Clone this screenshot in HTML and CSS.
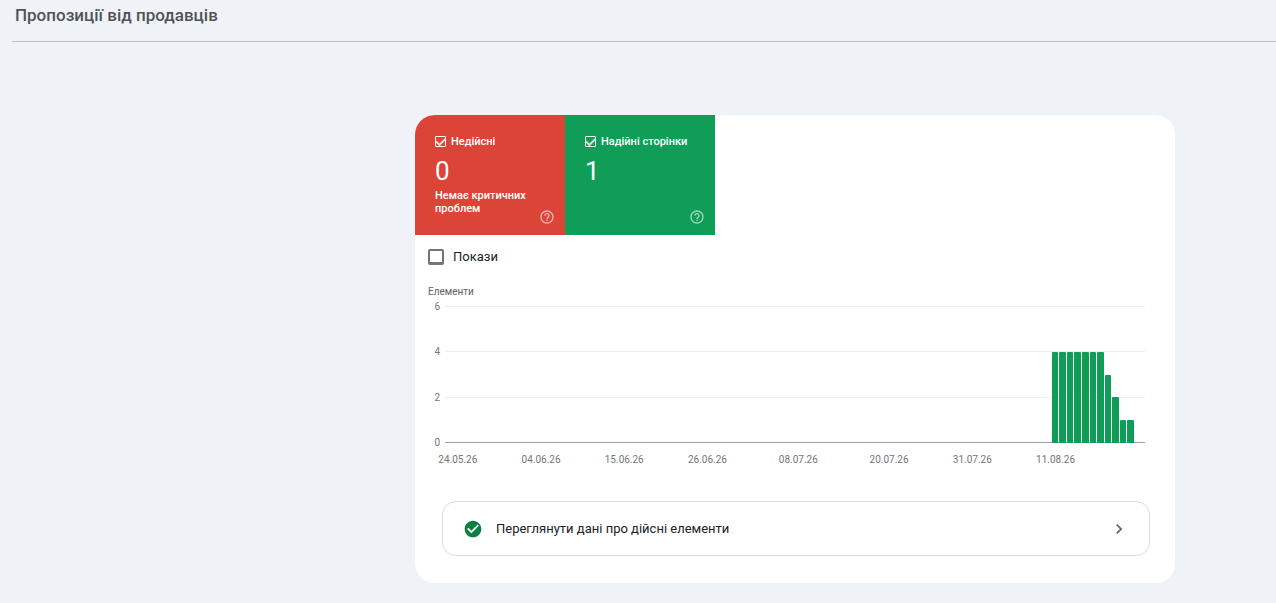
FILE: index.html
```
<!DOCTYPE html>
<html lang="uk">
<head>
    <meta charset="UTF-8">
    <meta name="viewport" content="width=device-width, initial-scale=1.0">
    <title>Пропозиції від продавців</title>
    <link rel="stylesheet" href="styles.css">
</head>
<body>
    <header class="page-header">
        <h1>Пропозиції від продавців</h1>
    </header>

    <main class="card">
        <div class="tiles">
            <section class="tile tile-invalid">
                <label class="tile-label"><input type="checkbox" checked>Недійсні</label>
                <div class="tile-value">0</div>
                <div class="tile-note">Немає критичних проблем</div>
                <button class="help" type="button" aria-label="Довідка">
                    <svg viewBox="0 0 24 24"><path d="M11 18h2v-2h-2v2zm1-16C6.48 2 2 6.48 2 12s4.480 10 10 10 10-4.480 10-10S17.520 2 12 2zm0 18c-4.410 0-8-3.590-8-8s3.590-8 8-8 8 3.590 8 8-3.590 8-8 8zm0-14c-2.210 0-4 1.790-4 4h2c0-1.100.9-2 2-2s2 .9 2 2c0 2-3 1.750-3 5h2c0-2.250 3-2.500 3-5 0-2.210-1.790-4-4-4z"/></svg>
                </button>
            </section>
            <section class="tile tile-valid">
                <label class="tile-label"><input type="checkbox" checked>Надійні сторінки</label>
                <div class="tile-value">1</div>
                <button class="help" type="button" aria-label="Довідка">
                    <svg viewBox="0 0 24 24"><path d="M11 18h2v-2h-2v2zm1-16C6.48 2 2 6.48 2 12s4.480 10 10 10 10-4.480 10-10S17.520 2 12 2zm0 18c-4.410 0-8-3.590-8-8s3.590-8 8-8 8 3.590 8 8-3.590 8-8 8zm0-14c-2.210 0-4 1.790-4 4h2c0-1.100.9-2 2-2s2 .9 2 2c0 2-3 1.750-3 5h2c0-2.250 3-2.500 3-5 0-2.210-1.790-4-4-4z"/></svg>
                </button>
            </section>
        </div>

        <label class="impressions"><input type="checkbox">Покази</label>

        <section class="chart">
            <div class="chart-title">Елементи</div>
            <div class="chart-body">
                <div class="y-axis"><span>6</span><span>4</span><span>2</span><span>0</span></div>
                <div class="plot">
                    <div class="lines"><i></i><i></i><i></i><i></i></div>
                    <div class="bars" id="bars"></div>
                </div>
                <div class="x-axis" id="xAxis"></div>
            </div>
        </section>

        <a class="details" href="#">
            <svg class="check" viewBox="0 0 24 24"><path d="M12 2C6.480 2 2 6.480 2 12s4.480 10 10 10 10-4.480 10-10S17.520 2 12 2zm-2 15l-5-5 1.410-1.410L10 14.170l7.590-7.590L19 8l-9 9z"/></svg>
            <span>Переглянути дані про дійсні елементи</span>
            <svg class="arrow" viewBox="0 0 24 24"><path d="M10 6L8.590 7.410 13.170 12l-4.580 4.590L10 18l6-6z"/></svg>
        </a>
    </main>

    <script>
        // one grid column per day, day 1 is 24.05.26
        const max = 6;
        const firstDay = 80;
        const values = [4, 4, 4, 4, 4, 4, 4, 3, 2, 1, 1];
        const labels = {
            1: "24.05.26",
            12: "04.06.26",
            23: "15.06.26",
            34: "26.06.26",
            46: "08.07.26",
            58: "20.07.26",
            69: "31.07.26",
            80: "11.08.26"
        };

        values.forEach((value, i) => {
            const bar = document.createElement("div");
            bar.className = "bar";
            bar.style.gridColumn = firstDay + i;
            bar.style.height = `${value / max * 100}%`;
            document.getElementById("bars").appendChild(bar);
        });

        Object.keys(labels).forEach((day) => {
            const label = document.createElement("span");
            label.textContent = labels[day];
            label.style.gridColumn = day;
            document.getElementById("xAxis").appendChild(label);
        });
    </script>
</body>
</html>
```
FILE: styles.css
```
* {
    box-sizing: border-box;
}

body {
    margin: 0;
    background-color: #eff3f8;
    color: #202124;
    font-family: Roboto, "Liberation Sans", sans-serif;
    font-size: 13px;
}

.page-header {
    margin-left: 12px;
    padding: 3px 3px 14px;
    border-bottom: 1px solid #bdc1c6;
}

h1 {
    margin: 0;
    font-size: 17px;
    line-height: 24px;
    font-weight: 500;
    color: #505356;
}

.card {
    max-width: 760px;
    margin: 73px 101px 20px auto;
    padding-bottom: 27px;
    background-color: #fff;
    border-radius: 20px;
    overflow: hidden;
}

.tiles {
    display: flex;
}

.tile {
    position: relative;
    width: 150px;
    height: 120px;
    padding: 20px 20px 0;
    color: #fff;
    font-size: 11px;
    font-weight: 500;
}

.tile-invalid { background-color: #db4437; }
.tile-valid { background-color: #0f9d58; }

.tile-label {
    display: flex;
    align-items: center;
    gap: 5px;
    line-height: 13px;
    white-space: nowrap;
}

.tile-label input {
    appearance: none;
    width: 11px;
    height: 11px;
    margin: 0;
    border: 1px solid #fff;
    border-radius: 1px;
    display: grid;
    place-items: center;
}

.tile-label input:checked::before {
    content: "";
    width: 7px;
    height: 4px;
    border: solid rgba(255, 255, 255, 0.8);
    border-width: 0 0 2px 2px;
    transform: translateY(-1px) rotate(-45deg);
}

.tile-value {
    margin: 7px 0 2px;
    font-size: 26px;
    line-height: 32px;
    font-weight: 400;
}

.tile-note {
    line-height: 13px;
}

.help {
    position: absolute;
    right: 10px;
    bottom: 10px;
    width: 16px;
    height: 16px;
    padding: 0;
    border: 0;
    background: none;
    cursor: pointer;
}

.help svg {
    display: block;
    fill: #fff;
    opacity: 0.6;
}

.impressions {
    display: flex;
    align-items: center;
    gap: 9px;
    width: max-content;
    margin: 13px 0 0 13px;
    line-height: 18px;
}

.impressions input {
    appearance: none;
    width: 16px;
    height: 16px;
    margin: 0;
    border: 2px solid #757575;
    border-bottom-width: 3px;
    border-radius: 2px;
}

.chart {
    margin: 19px 30px 0 13px;
    font-size: 10px;
    color: #757575;
}

.chart-title {
    line-height: 14px;
    color: #616161;
}

.chart-body {
    display: grid;
    grid-template-columns: 12px 1fr;
    column-gap: 5px;
    margin-top: 7px;
}

.y-axis, .lines {
    display: flex;
    flex-direction: column;
    justify-content: space-between;
}

.y-axis span {
    height: 1px;
    line-height: 1px;
    text-align: right;
}

.plot {
    display: grid;
    height: 137px;
}

.lines, .bars {
    grid-area: 1 / 1;
}

.lines i {
    height: 1px;
    background-color: #eee;
}

.lines i:last-child { background-color: #9e9e9e; }

.bars, .x-axis {
    display: grid;
    grid-template-columns: repeat(90, minmax(0, 1fr));
    padding: 0 10px 0 9px;
}

.bars {
    align-items: end;
}

.bar {
    margin-right: 1px;
    background-color: #0f9d58;
    border-radius: 1px 1px 0 0;
}

.x-axis {
    grid-column: 2;
    margin-top: 9px;
    line-height: 16px;
}

.x-axis span {
    justify-self: center;
}

.details {
    display: flex;
    align-items: center;
    height: 55px;
    margin: 33px 25px 0 27px;
    padding: 0 20px;
    border: 1px solid #dadce0;
    border-radius: 14px;
    color: #202124;
    text-decoration: none;
}

.details span {
    flex: 1;
    margin-left: 13px;
}

.details svg {
    width: 20px;
    height: 20px;
}

.check { fill: #0b8043; }
.arrow { fill: #5f6368; }
```
